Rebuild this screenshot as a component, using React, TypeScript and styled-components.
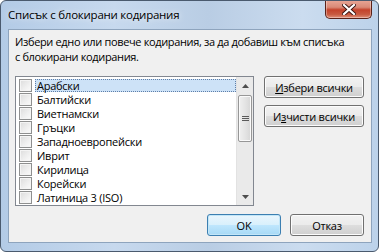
import React from 'react';
import styled, { createGlobalStyle, css } from 'styled-components';

const GlobalStyle = createGlobalStyle`
  html, body {
    margin: 0;
    padding: 0;
    background: #ffffff;
  }
  * {
    box-sizing: border-box;
  }
`;

const Window = styled.div`
  width: 379px;
  height: 252px;
  display: flex;
  flex-direction: column;
  border: 1px solid #4a5a6e;
  border-radius: 6px;
  overflow: hidden;
  background: linear-gradient(90deg, #b3cbe6 0%, #c7d9ee 30%, #b9cde4 55%, #cbdcef 80%, #bcd2ea 100%);
  font-family: 'Open Sans', 'Noto Sans', sans-serif;
  font-size: 11px;
  letter-spacing: -0.25px;
  color: #000;
`;

const TitleBar = styled.div`
  height: 28px;
  display: flex;
  align-items: flex-start;
  justify-content: space-between;
  padding-left: 7px;
  padding-right: 6px;
`;

const Title = styled.span`
  margin-top: 6px;
  font-size: 11.5px;
  color: #000;
  text-shadow: 0 0 6px rgba(255, 255, 255, 0.9);
`;

const CloseButton = styled.div`
  width: 47px;
  height: 19px;
  margin-top: -1px;
  display: flex;
  align-items: center;
  justify-content: center;
  border: 1px solid #5a2219;
  border-top: none;
  border-radius: 0 0 5px 5px;
  background: linear-gradient(180deg, #e9a797 0%, #d98a77 40%, #c4422b 55%, #c85a40 80%, #e0907a 100%);
  box-shadow: inset 0 0 0 1px rgba(255, 255, 255, 0.35);
`;

const Client = styled.div`
  flex: 1;
  margin: 0 6px 8px 7px;
  display: flex;
  flex-direction: column;
  background: #f0f0f0;
  border: 1px solid #8ea4bd;
  padding: 4px 7px 6px 6px;
`;

const Description = styled.p`
  margin: 0 0 12px;
  line-height: 15px;
  white-space: nowrap;
  letter-spacing: -0.35px;
`;

const Body = styled.div`
  display: flex;
  align-items: flex-start;
  gap: 10px;
`;

const ListBox = styled.div`
  width: 239px;
  height: 130px;
  display: flex;
  border: 1px solid #828790;
  background: #fff;
`;

const Items = styled.ul`
  flex: 1;
  margin: 0;
  padding: 1px 0 0 3px;
  list-style: none;
`;

const Item = styled.li`
  height: 14px;
  display: flex;
  align-items: center;
  gap: 3px;
`;

const Check = styled.span`
  width: 13px;
  height: 13px;
  flex: none;
  border: 1px solid #8e8f8f;
  background: linear-gradient(135deg, #dcdcdc 0%, #f0f0f0 60%, #fbfbfb 100%);
  box-shadow: inset 0 0 0 1px #f4f4f4;
`;

const Label = styled.span<{ $selected?: boolean }>`
  flex: 1;
  height: 13px;
  line-height: 12px;
  padding-left: 1px;
  white-space: nowrap;
  border: 1px solid transparent;
  ${(p) =>
    p.$selected &&
    css`
      background: #cde2f7;
      border: 1px dotted #5f7fa8;
    `}
`;

const ScrollBar = styled.div`
  width: 17px;
  display: flex;
  flex-direction: column;
  background: #eaeaea;
  border-left: 1px solid #e2e2e2;
`;

const Arrow = styled.div`
  height: 17px;
  display: flex;
  align-items: center;
  justify-content: center;
`;

const Track = styled.div`
  flex: 1;
  padding: 1px 1px;
`;

const Thumb = styled.div`
  height: 47px;
  display: flex;
  align-items: center;
  justify-content: center;
  border: 1px solid #979797;
  border-radius: 2px;
  background: linear-gradient(90deg, #f0f0f0 0%, #e4e4e4 50%, #d6d6d6 100%);
  box-shadow: inset 0 0 0 1px #fafafa;
`;

const Grip = styled.div`
  width: 7px;
  display: flex;
  flex-direction: column;
  gap: 1px;
  span {
    height: 1px;
    background: #5a5a5a;
  }
`;

const SideButtons = styled.div`
  display: flex;
  flex-direction: column;
  gap: 7px;
`;

const Button = styled.button<{ $width: number; $default?: boolean }>`
  width: ${(p) => p.$width}px;
  height: 22px;
  padding: 0;
  font-family: inherit;
  font-size: 11px;
  letter-spacing: inherit;
  color: #000;
  border: 1px solid #707070;
  border-radius: 3px;
  background: linear-gradient(180deg, #f2f2f2 0%, #ebebeb 48%, #dddddd 52%, #cfcfcf 100%);
  box-shadow: inset 0 0 0 1px #fcfcfc;
  ${(p) =>
    p.$default &&
    css`
      border-color: #3c7fb1;
      background: linear-gradient(180deg, #eaf6fd 0%, #d9f0fc 48%, #bee6fd 52%, #a7d9f5 100%);
      box-shadow: inset 0 0 0 1px #c2e6f8;
    `}
`;

const Footer = styled.div`
  margin-top: auto;
  display: flex;
  justify-content: flex-end;
  gap: 9px;
`;

const encodings = [
  'Арабски',
  'Балтийски',
  'Виетнамски',
  'Гръцки',
  'Западноевропейски',
  'Иврит',
  'Кирилица',
  'Корейски',
  'Латиница 3 (ISO)',
];

const App: React.FC = () => {
  return (
    <>
      <GlobalStyle />
      <Window>
        <TitleBar>
          <Title>Списък с блокирани кодирания</Title>
          <CloseButton>
            <svg width="14" height="11" viewBox="0 0 14 11">
              <path
                d="M2 1 L12 10 M12 1 L2 10"
                stroke="#3b1410"
                strokeWidth="4"
                strokeLinecap="square"
              />
              <path
                d="M2 1 L12 10 M12 1 L2 10"
                stroke="#ffffff"
                strokeWidth="2.2"
                strokeLinecap="square"
              />
            </svg>
          </CloseButton>
        </TitleBar>
        <Client>
          <Description>
            Избери едно или повече кодирания, за да добавиш към списъка
            <br />с блокирани кодирания.
          </Description>
          <Body>
            <ListBox>
              <Items>
                {encodings.map((name, i) => (
                  <Item key={name}>
                    <Check />
                    <Label $selected={i === 0}>{name}</Label>
                  </Item>
                ))}
              </Items>
              <ScrollBar>
                <Arrow>
                  <svg width="7" height="4" viewBox="0 0 7 4">
                    <path d="M0 4 L3.5 0 L7 4 Z" fill="#4d4d4d" />
                  </svg>
                </Arrow>
                <Track>
                  <Thumb>
                    <Grip>
                      <span />
                      <span />
                      <span />
                    </Grip>
                  </Thumb>
                </Track>
                <Arrow>
                  <svg width="7" height="4" viewBox="0 0 7 4">
                    <path d="M0 0 L7 0 L3.5 4 Z" fill="#4d4d4d" />
                  </svg>
                </Arrow>
              </ScrollBar>
            </ListBox>
            <SideButtons>
              <Button $width={100}>
                <u>И</u>збери всички
              </Button>
              <Button $width={100}>
                И<u>з</u>чисти всички
              </Button>
            </SideButtons>
          </Body>
          <Footer>
            <Button $width={74} $default>
              OK
            </Button>
            <Button $width={74}>Отказ</Button>
          </Footer>
        </Client>
      </Window>
    </>
  );
};

export default App;
